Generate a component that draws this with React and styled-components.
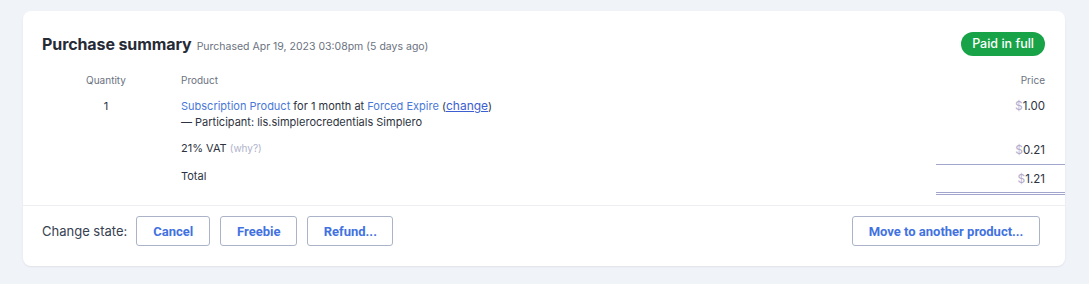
import React from 'react';
import styled, { createGlobalStyle } from 'styled-components';

const GlobalStyle = createGlobalStyle`
body{
  margin: 0;
  background: #f0f3f8;
  font-family: Inter, "Noto Sans", sans-serif;
  color: #2d3340;
}
`;

const Page = styled.div`
padding: 11px 24px 18px 23px;
`;

const Card = styled.div`
background: #fff;
border-radius: 8px;
box-shadow: 0 1px 2px rgba(30, 40, 70, 0.08);
height: 255px;
box-sizing: border-box;
padding-top: 20px;
display: flex;
flex-direction: column;
`;

const Header = styled.div`
display: flex;
align-items: center;
justify-content: space-between;
height: 26px;
padding: 0 20px 0 19px;
`;

const TitleWrap = styled.div`
display: flex;
align-items: baseline;
gap: 5px;
`;

const Title = styled.h2`
margin: 0;
font-size: 16px;
font-weight: 700;
letter-spacing: -0.1px;
color: #262b36;
`;

const Sub = styled.span`
font-size: 10.5px;
color: #6b7280;
`;

const Badge = styled.span`
background: #18a349;
color: #fff;
font-size: 12.5px;
font-weight: 500;
height: 24px;
line-height: 24px;
padding: 0 11px;
border-radius: 12px;
`;

const Table = styled.div`
display: grid;
grid-template-columns: 126px 1fr 129px;
margin: 13px 0 10px 20px;
font-size: 11px;
line-height: 16px;
`;

const Cell = styled.div`
padding: ${p => p.pad || '0'};
text-align: ${p => p.align || 'left'};
padding-left: ${p => p.indent ? '12px' : undefined};
`;

const Head = styled.div`
font-size: 10px;
line-height: 14px;
color: #6b7280;
padding: 3px ${p => p.right ? '20px' : '0'} 3px ${p => p.indent ? '12px' : '0'};
text-align: ${p => p.align || 'left'};
`;

const PriceCell = styled.div`
text-align: right;
font-size: 11.5px;
padding: ${p => p.pad};
padding-right: 20px;
border-bottom: ${p => p.line === 'single' ? '1px solid #a3a6cc' : p.line === 'double' ? '3px double #a3a6cc' : 'none'};
`;

const Dollar = styled.span`
color: #b3accd;
font-size: 12px;
`;

const Link = styled.a`
color: #4a78d8;
text-decoration: none;
`;

const ChangeLink = styled.a`
color: #3c5ed0;
text-decoration: underline;
font-size: 12px;
`;

const Muted = styled.span`
color: #b0b3cc;
font-size: 10px;
`;

const Footer = styled.div`
border-top: 1px solid #eceef2;
display: flex;
align-items: center;
padding: 10px 25px 0 19px;
gap: 10px;
`;

const Label = styled.span`
font-size: 13px;
color: #374151;
margin-right: -1px;
`;

const Button = styled.button`
font-family: Roboto, "Liberation Sans", sans-serif;
font-weight: 700;
font-size: 13px;
color: #4272df;
background: #fff;
border: 1px solid #aab3c7;
border-radius: 3px;
height: 30px;
width: ${p => p.w}px;
margin-left: ${p => p.push ? 'auto' : '0'};
cursor: pointer;
`;

const Price = ({ v }) => (
  <>
    <Dollar>$</Dollar>{v}
  </>
);

const App = () => {
  return (
    <>
      <GlobalStyle />
      <Page>
        <Card>
          <Header>
            <TitleWrap>
              <Title>Purchase summary</Title>
              <Sub>Purchased Apr 19, 2023 03:08pm (5 days ago)</Sub>
            </TitleWrap>
            <Badge>Paid in full</Badge>
          </Header>

          <Table>
            <Head align="center">Quantity</Head>
            <Head indent>Product</Head>
            <Head align="right" right>Price</Head>

            <Cell align="center" pad="8px 0 10px">1</Cell>
            <Cell indent pad="8px 0 10px">
              <Link href="#">Subscription Product</Link> for 1 month at <Link href="#">Forced Expire</Link> (<ChangeLink href="#">change</ChangeLink>)
              <div>— Participant: lis.simplerocredentials Simplero</div>
            </Cell>
            <PriceCell pad="8px 0 10px"><Price v="1.00" /></PriceCell>

            <Cell />
            <Cell indent>21% VAT <Muted>(why?)</Muted></Cell>
            <PriceCell pad="2px 0 6px" line="single"><Price v="0.21" /></PriceCell>

            <Cell />
            <Cell indent pad="3px 0 0">Total</Cell>
            <PriceCell pad="6px 0 5px" line="double"><Price v="1.21" /></PriceCell>
          </Table>

          <Footer>
            <Label>Change state:</Label>
            <Button w={74}>Cancel</Button>
            <Button w={77}>Freebie</Button>
            <Button w={86}>Refund...</Button>
            <Button w={188} push>Move to another product...</Button>
          </Footer>
        </Card>
      </Page>
    </>
  );
};

export default App;
